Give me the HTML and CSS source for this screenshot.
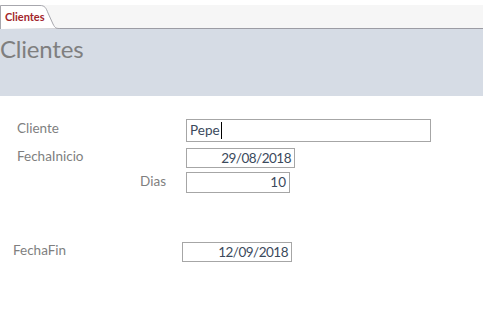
FILE: index.html
```html
<!DOCTYPE html>
<html lang="es">
<head>
    <meta charset="UTF-8">
    <title>Clientes</title>
    <link rel="stylesheet" href="styles.css">
</head>
<body>
    <div class="tabbar">
        <div class="tab">
            <svg class="tab-shape" width="60" height="24" viewBox="0 0 60 24">
                <path d="M0.5 24 V0.5 H40 C45 0.5 46 3 48 8 L53 19 C55 23 56 23.5 60 23.5" fill="#fff" stroke="#a7a7ad"/>
            </svg>
            <span class="tab-label">Clientes</span>
        </div>
    </div>

    <div class="header">
        <h1>Clientes</h1>
    </div>

    <div class="form">
        <div class="row row-cliente">
            <span class="label">Cliente</span>
            <div class="field field-wide">Pepe<span class="caret"></span></div>
        </div>
        <div class="row row-inicio">
            <span class="label">FechaInicio</span>
            <div class="field field-date">29/08/2018</div>
        </div>
        <div class="row row-dias">
            <span class="label label-right">Dias</span>
            <div class="field field-num">10</div>
        </div>
        <div class="row row-fin">
            <span class="label">FechaFin</span>
            <div class="field field-date">12/09/2018</div>
        </div>
    </div>
</body>
</html>
```

FILE: styles.css
```css
body {
    margin: 0;
    font-family: Lato, 'Liberation Sans', sans-serif;
    background: #fff;
}
.tabbar {
    height: 23px;
    padding-top: 5px;
    background: linear-gradient(#fff 0, #fff 5px, #f6f6f6 5px);
    border-bottom: 1px solid #9c9ca4;
}
.tab {
    position: relative;
    width: 60px;
    height: 24px;
}
.tab-shape {
    position: absolute;
    top: 0;
    left: 0;
}
.tab-label {
    position: relative;
    display: block;
    padding: 5px 0 0 5px;
    font-size: 11px;
    font-weight: bold;
    color: #a3262b;
}
.header {
    height: 67px;
    background: #d6dce5;
}
.header h1 {
    margin: 0;
    padding-top: 5px;
    font-size: 24px;
    font-weight: normal;
    color: #7f7f7f;
    line-height: 30px;
    letter-spacing: -0.2px;
}
.form {
    padding-top: 23px;
}
.row {
    display: flex;
    align-items: flex-start;
    padding-left: 17px;
}
.label {
    width: 169px;
    font-size: 13.5px;
    color: #7f7f7f;
}
.label-right {
    text-align: right;
    padding-right: 20px;
    box-sizing: border-box;
}
.row-cliente .label { padding-top: 1px; }
.row-inicio { margin-top: 6px; }
.row-inicio .label { padding-top: 0; }
.row-dias { margin-top: 4px; }
.row-dias .label { padding-top: 1px; }
.row-fin {
    margin-top: 49px;
    padding-left: 13px;
}
.row-fin .label { padding-top: 0; }
.field {
    box-sizing: border-box;
    border: 1px solid #a6a6a6;
    font-size: 13.5px;
    color: #3b4a5c;
    padding: 0 3px;
    white-space: nowrap;
}
.field-wide {
    width: 245px;
    height: 23px;
    line-height: 21px;
}
.field-date {
    width: 109px;
    height: 20px;
    line-height: 18px;
    text-align: right;
    letter-spacing: -0.5px;
    padding-right: 3px;
}
.row-fin .field-date {
    width: 110px;
}
.field-num {
    width: 104px;
    height: 21px;
    line-height: 19px;
    text-align: right;
}
.caret {
    display: inline-block;
    width: 1px;
    height: 17px;
    background: #000;
    vertical-align: -4px;
    margin-left: 1px;
}
```
